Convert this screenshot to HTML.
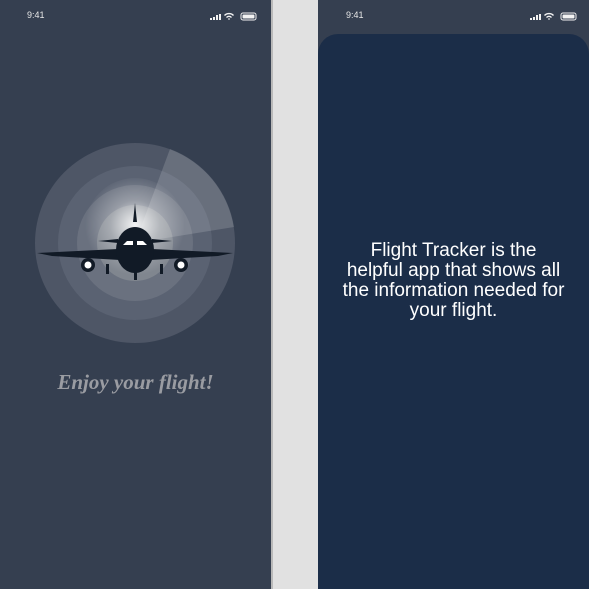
<!DOCTYPE html>
<html><head><style>
html,body{margin:0;width:589px;height:589px;overflow:hidden}
body{background:#e1e1e1;position:relative;font-family:"Liberation Sans",sans-serif}
.ph{position:absolute;top:0;bottom:0;background:#353f50}
.sb{position:absolute;top:10px;font-size:9px;color:#e8e8e8}
</style></head><body>
<div class="ph" style="left:0;width:271px;border-right:2px solid #b9b9b9"></div>
<div class="ph" style="left:318px;width:271px"></div>
<div class="sb" style="left:27px">9:41</div>
<div class="sb" style="left:346px">9:41</div>
<svg style="position:absolute;left:0;top:0" width="589" height="40">
 <g fill="#f2f2f2">
  <g id="st"><rect x="210" y="18" width="2" height="2"/><rect x="213" y="17" width="2" height="3"/><rect x="216" y="15" width="2" height="5"/><rect x="219" y="14" width="2" height="6"/>
  <path d="M224 15a7 7 0 0 1 10 0l-1 1a5.5 5.5 0 0 0-8 0z M226 17a4 4 0 0 1 6 0l-1 1a2.5 2.5 0 0 0-4 0z M228 19l1-1 1 1-1 1z"/>
  <rect x="241" y="13" width="15" height="7" rx="2" fill="none" stroke="#f2f2f2" stroke-width="1"/><rect x="242.5" y="14.5" width="12" height="4" rx="1"/></g>
  <use href="#st" x="320"/>
 </g>
</svg>
<div style="position:absolute;left:318px;top:34px;width:271px;height:560px;background:#1b2d48;border-radius:20px 20px 0 0"></div>
<div style="position:absolute;left:318px;top:241px;width:271px;text-align:center;color:#fff;font-size:19px;line-height:20px">Flight Tracker is the<br>helpful app that shows all<br>the information needed for<br>your flight.</div>
<svg style="position:absolute;left:0;top:0" width="271" height="589">
 <defs><radialGradient id="g" cx="135" cy="225" r="50" gradientUnits="userSpaceOnUse"><stop offset="0" stop-color="#ffffff" stop-opacity="0.9"/><stop offset="0.5" stop-color="#ffffff" stop-opacity="0.3"/><stop offset="1" stop-color="#ffffff" stop-opacity="0"/></radialGradient></defs>
 <circle cx="135" cy="243" r="100" fill="#4e5666"/>
 <circle cx="135" cy="243" r="77" fill="#5a6272"/>
 <circle cx="135" cy="243" r="58" fill="#6a717f"/>
 <circle cx="135" cy="243" r="38" fill="#80868f"/>
 <path d="M135 243L170 149A100 100 0 0 1 234 227Z" fill="#ffffff" opacity="0.15"/>
 <circle cx="135" cy="228" r="50" fill="url(#g)"/>
 <g fill="#111a26">
  <path d="M133 222L135 203L137 222Z"/>
  <path d="M98 241L118 239L118 243Z M172 241L152 239L152 243Z"/>
  <path d="M37 253L118 249L120 260L52 256Z M233 253L152 249L150 260L218 256Z"/>
  <ellipse cx="135" cy="250" rx="19" ry="23"/>
  <circle cx="88" cy="265" r="7"/><circle cx="181" cy="265" r="7"/>
  <rect x="106" y="264" width="3" height="10"/><rect x="160" y="264" width="3" height="10"/>
  <rect x="134" y="268" width="3" height="12"/>
 </g>
 <g fill="#fff"><circle cx="88" cy="265" r="3.5"/><circle cx="181" cy="265" r="3.5"/>
  <path d="M123 245L127 241L133 241L133 245Z M147 245L143 241L137 241L137 245Z"/></g>
</svg>
<div style="position:absolute;left:0;width:271px;top:370px;text-align:center;font-family:'Liberation Serif',serif;font-style:italic;font-weight:bold;font-size:21px;color:#9a9ca2">Enjoy your flight!</div>
</body></html>
